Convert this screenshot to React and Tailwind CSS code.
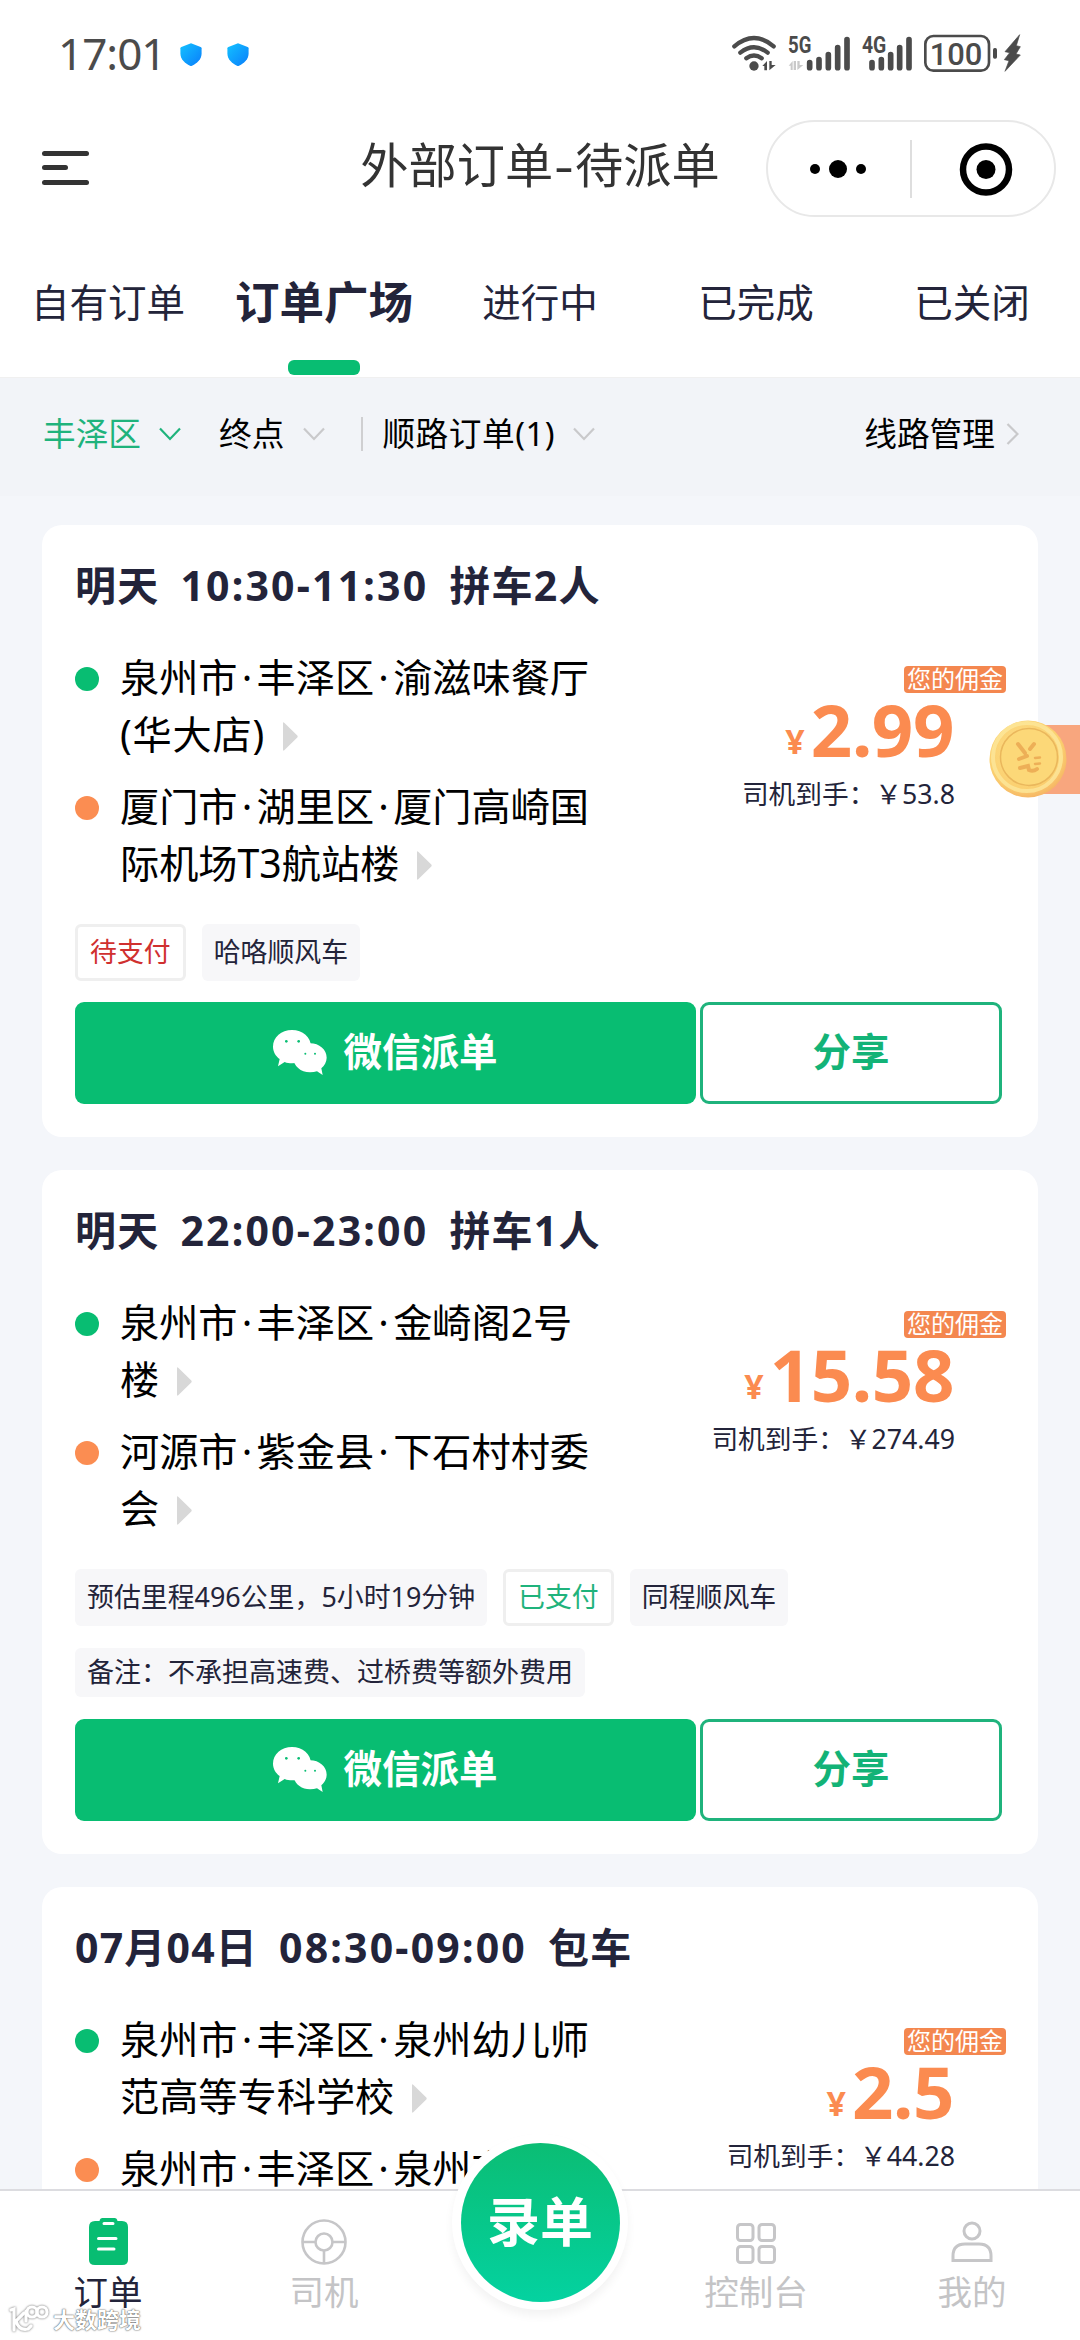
import { Fragment } from 'react'

const TABS = ['自有订单', '订单广场', '进行中', '已完成', '已关闭']

const ORDERS = [
  {
    id: 1,
    title: ['明天', '10:30-11:30', '拼车2人'],
    from: ['泉州市·丰泽区·渝滋味餐厅', '(华大店)'],
    to: ['厦门市·湖里区·厦门高崎国', '际机场T3航站楼'],
    price: '2.99',
    income: '53.8',
    tags: [
      { label: '待支付', type: 'unpaid' },
      { label: '哈咯顺风车', type: 'plain' },
    ],
  },
  {
    id: 2,
    title: ['明天', '22:00-23:00', '拼车1人'],
    from: ['泉州市·丰泽区·金崎阁2号', '楼'],
    to: ['河源市·紫金县·下石村村委', '会'],
    price: '15.58',
    income: '274.49',
    tags: [
      { label: '预估里程496公里，5小时19分钟', type: 'plain' },
      { label: '已支付', type: 'paid' },
      { label: '同程顺风车', type: 'plain' },
    ],
    remark: '备注：不承担高速费、过桥费等额外费用',
  },
  {
    id: 3,
    title: ['07月04日', '08:30-09:00', '包车'],
    from: ['泉州市·丰泽区·泉州幼儿师', '范高等专科学校'],
    to: ['泉州市·丰泽区·泉州市'],
    price: '2.5',
    income: '44.28',
    tags: [],
  },
]

const TAG_STYLES = {
  plain: 'bg-[#f7f7f9] text-[#23243a] px-[12px]',
  unpaid: 'border-[3px] border-[#efefef] text-[#d0302f] px-[12px]',
  paid: 'border-[3px] border-[#efefef] text-[#1fb37c] px-[12px]',
}

function Shield({ id }) {
  return (
    <svg className="w-[22px] h-[23px]" viewBox="0 0 22 23">
      <defs>
        <linearGradient id={id} x1="0" y1="0" x2="1" y2="1">
          <stop offset="0" stopColor="#13c2ff" />
          <stop offset="1" stopColor="#0a7dfb" />
        </linearGradient>
      </defs>
      <path d="M11 .3l9.6 3.6c.7.3 1 .7 1 1.4v5.2c0 5.600-4.400 9.800-9.600 12.200-.7.300-1.300.300-2 0C4.800 20.300.4 16.100.4 10.500V5.300c0-.7.300-1.100 1-1.400z" fill={`url(#${id})`} />
    </svg>
  )
}

function StatusIcons() {
  return (
    <svg className="w-[310px] h-[70px]" viewBox="0 0 930 210" fill="#4b4b4b">
      {/* wifi */}
      <g fill="none" stroke="#4b4b4b" strokeWidth="13" strokeLinecap="round">
        <path d="M28 79Q87 29 146 79" />
        <path d="M46 98Q87 66 128 98" />
        <path d="M64 115Q87 98 110 115" />
      </g>
      <circle cx="87" cy="138" r="14" />
      <path d="M112 138l14-15v28h-8v-13zM133 151v-28h7v12h12z" />
      {/* 5G */}
      <text x="189" y="100" fontSize="69" fontWeight="700" textLength="70" lengthAdjust="spacingAndGlyphs" className="font-['Roboto']">5G</text>
      <path d="M191 137l12-14v27h-6v-13zM206 123h7v27h-7zM217 123h7v12h11l-18 15z" fill="#c9c9c9" />
      <g stroke="#4b4b4b" strokeWidth="17" strokeLinecap="round">
        <path d="M254 128v15M282 119v24M310 104v39M338 83v60M366 59v84" />
        <path d="M441 128v15M469 119v24M497 104v39M524 83v60M552 59v84" />
      </g>
      {/* 4G */}
      <text x="411" y="100" fontSize="69" fontWeight="700" textLength="73" lengthAdjust="spacingAndGlyphs" className="font-['Roboto']">4G</text>
      {/* battery */}
      <rect x="601" y="48" width="191" height="104" rx="24" fill="none" stroke="#4b4b4b" strokeWidth="8" />
      <text x="614" y="134" fontSize="94" fontWeight="500" textLength="158" lengthAdjust="spacingAndGlyphs" className="font-['Roboto']">100</text>
      <rect x="804" y="84" width="12" height="32" rx="5" />
      <path d="M884 44l-44 51 14 3-16 21 14 3-12 32 46-49-13-3 13-22-12-3z" strokeLinejoin="round" stroke="#4b4b4b" strokeWidth="2" />
    </svg>
  )
}

function WechatIcon() {
  return (
    <svg className="w-[54px] h-[45px]" viewBox="0 0 162 135" fill="#fff">
      <path d="M57 0c32 0 57 22 57 50s-25 50-57 50c-8 0-15-1-22-4l-20 13 5-22C8 78 0 65 0 50 0 22 25 0 57 0z" />
      <path d="M111 40c28 0 50 19 50 43 0 13-7 24-16 32l4 20-17-11c-6 2-13 3-21 3-28 0-50-20-50-44s22-43 50-43z" />
      <g fill="#0abe74">
        <circle cx="40" cy="34" r="4" />
        <circle cx="77" cy="34" r="4" />
        <circle cx="97" cy="71" r="3" />
        <circle cx="126" cy="71" r="3" />
      </g>
    </svg>
  )
}

function Chevron({ color }) {
  return (
    <svg className="w-[22px] h-[14px]" viewBox="0 0 22 14" fill="none" stroke={color} strokeWidth="2.2">
      <path d="M1 1.500l10 10.500L21 1.500" />
    </svg>
  )
}

function Place({ lines, dot }) {
  return (
    <div className="flex">
      <span className={`w-6 h-6 rounded-full mt-[19px] mr-[21px] shrink-0 ${dot}`}></span>
      <div className="text-[39.200px] leading-[57px] text-black whitespace-nowrap">
        {lines.map((line, i) => (
          <div key={i} className={`flex items-center h-[57px] ${line.startsWith('(') ? 'tracking-[0.800px]' : ''}`}>
            {line.split('·').map((part, j) => (
              <Fragment key={j}>
                {j > 0 && <span className="w-[19px] text-center">·</span>}
                <span>{part}</span>
              </Fragment>
            ))}
            {i > 0 && (
              <svg className="w-[15px] h-[29px] ml-[18px] mt-[6px]" viewBox="0 0 15 29" fill="#d8d8d8">
                <path d="M0 1.500Q0-.5 1.500 1L14.300 13.500q.8 1 0 2L1.500 28Q0 29.500 0 27.500z" />
              </svg>
            )}
          </div>
        ))}
      </div>
    </div>
  )
}

function OrderCard({ order }) {
  return (
    <div className="bg-white rounded-[20px] px-[33px] pb-[33px]">
      <h2 className="flex gap-[21px] pt-[31px] text-[41px] leading-[58px] font-bold text-[#23243a] whitespace-nowrap">
        {order.title.map((part) => (
          <span key={part} className={part.includes(':') ? 'tracking-[2.200px]' : 'tracking-[1.200px]'}>{part}</span>
        ))}
      </h2>

      <div className="flex justify-between mt-[34px]">
        <div className="flex flex-col gap-[15px]">
          <Place lines={order.from} dot="bg-[#08bd72]" />
          <Place lines={order.to} dot="bg-[#fb8d52]" />
        </div>

        {/* Commission */}
        <div className="flex flex-col items-end pt-[18px]">
          <span className="-mr-[1px] h-[27px] w-[102px] rounded-[4px] bg-[#f4874f] text-white text-[24px] leading-[26px] text-center whitespace-nowrap">
            您的佣金
          </span>
          <div className="mr-[51px] -mt-[2px] h-[76px] flex items-baseline gap-[6px] font-bold text-[#fb8b50] leading-[76px]">
            <span className="text-[34px] relative -top-[3px]">¥</span>
            <span className="text-[72.500px] tracking-[-0.400px]">{order.price}</span>
          </div>
          <div className="mr-[50px] mt-[8px] text-[26.700px] leading-[38px] text-[#23243a] whitespace-nowrap">
            司机到手：￥{order.income}
          </div>
        </div>
      </div>

      <div className="flex gap-[16px] mt-[33px] text-[26.900px] leading-[38px] whitespace-nowrap">
        {order.tags.map((tag) => (
          <span key={tag.label} className={`h-[57px] flex items-center rounded-[6px] pb-px ${TAG_STYLES[tag.type]}`}>
            {tag.label}
          </span>
        ))}
      </div>
      {order.remark && (
        <div className="mt-[22px] mb-[22px] h-[49px] w-fit px-[12px] pb-px flex items-center bg-[#f7f7f9] rounded-[6px] text-[27px] text-[#23243a] whitespace-nowrap">
          {order.remark}
        </div>
      )}

      <div className={`flex gap-[4px] h-[102px] text-[38.500px] font-bold ${order.remark ? '' : 'mt-[21px]'}`}>
        <button className="w-[621px] rounded-[9px] bg-[#08bd72] text-white flex items-center justify-center gap-[16px] pb-[2px]">
          <WechatIcon />
          <span className="-mt-px">微信派单</span>
        </button>
        <button className="w-[302px] rounded-[9px] border-[3px] border-[#1fb37c] text-[#13b377] flex items-center justify-center pb-[3px]">
          分享
        </button>
      </div>
    </div>
  )
}

function NavItem({ icon, label, active }) {
  return (
    <div className={`w-[216px] flex flex-col items-center text-[34.500px] ${active ? 'text-[#23243a]' : 'text-[#c4c4c6]'}`}>
      <div className="h-[80px] pt-[27px]">{icon}</div>
      <span className="leading-[42px]">{label}</span>
    </div>
  )
}

export default function App() {
  return (
    <div className="w-[1080px] h-[2340px] overflow-hidden relative flex flex-col bg-[#f4f6fa] font-['Noto_Sans','Noto_Sans_CJK_SC',sans-serif]">
      {/* Status bar */}
      <div className="bg-white h-[110px] shrink-0 flex items-start pl-[58px] pr-[45px]">
        <span className="mt-[25px] w-[122px] text-[44px] leading-[56px] tracking-[-1px] text-[#4b4b4b]">
          17:01
        </span>
        <div className="mt-[43px] flex gap-[25px]">
          <Shield id="shield-a" />
          <Shield id="shield-b" />
        </div>
        <div className="ml-auto mt-[20px]">
          <StatusIcons />
        </div>
      </div>

      {/* Title bar */}
      <div className="bg-white h-[118px] shrink-0 flex items-center pl-[42px] pr-[24px]">
        <div className="flex flex-col gap-[9.500px] mb-[3px]">
          <span className="w-[47px] h-[5px] rounded-full bg-[#333]"></span>
          <span className="w-[26px] h-[5px] rounded-full bg-[#333]"></span>
          <span className="w-[47px] h-[5px] rounded-full bg-[#333]"></span>
        </div>
        <h1 className="w-[440px] ml-[231px] flex justify-center text-[48.200px] leading-[70px] mb-[10px] text-[#333] whitespace-nowrap">
          外部订单<span className="w-[22px] flex justify-center scale-x-125">-</span>待派单
        </h1>
        <div className="ml-auto -mt-px w-[290px] h-[97px] shrink-0 rounded-full border-2 border-[#e8e8e8] flex items-center justify-center">
          <svg className="w-[286px] h-[94px]" viewBox="0 0 286 94">
            <circle cx="47" cy="47" r="5" />
            <circle cx="70" cy="47" r="9" />
            <circle cx="93" cy="47" r="5" />
            <path d="M143 18v58" stroke="#dedede" strokeWidth="2" />
            <circle cx="218" cy="47.500" r="23" fill="none" stroke="#000" strokeWidth="6.500" />
            <circle cx="218" cy="47.500" r="9.500" />
          </svg>
        </div>
      </div>

      {/* Tabs */}
      <div className="bg-white h-[150px] shrink-0 flex border-b border-[#f0f0f0]">
        {TABS.map((tab, i) => (
          <div key={tab} className="w-[216px] flex flex-col items-center text-[#23243a]">
            <span className={`mt-[44px] h-[60px] leading-[60px] whitespace-nowrap ${i === 1 ? 'text-[44.500px] font-bold' : 'text-[38.500px]'}`}>
              {tab}
            </span>
            {i === 1 && <span className="mt-[28px] w-[72px] h-[15px] rounded-[6px] bg-[#08bd72]"></span>}
          </div>
        ))}
      </div>

      {/* Filters */}
      <div className="bg-[#f2f4f8] h-[118px] shrink-0 flex items-start pt-[31px] px-[43px] text-[32.700px] text-black whitespace-nowrap">
        <div className="flex items-center h-[50px] w-full">
          <span className="text-[#1fb37c]">丰泽区</span>
          <span className="ml-[18px]"><Chevron color="#1fb37c" /></span>
          <span className="ml-[38px]">终点</span>
          <span className="ml-[19px]"><Chevron color="#c9c9cb" /></span>
          <span className="ml-[36px] mr-[19px] w-[2px] h-[34px] bg-[#cfcfd1]"></span>
          <span className="tracking-[0.500px]">顺路订单(1)</span>
          <span className="ml-[18px]"><Chevron color="#c9c9cb" /></span>
          <span className="ml-auto">线路管理</span>
          <svg className="w-[13px] h-[22px] ml-[11px] mr-[18px]" viewBox="0 0 13 22" fill="none" stroke="#c9c9cb" strokeWidth="2.200">
            <path d="M1.500 1L11.500 11l-10 10" />
          </svg>
        </div>
      </div>

      {/* Order list */}
      <div className="flex-1 min-h-0 overflow-hidden px-[42px] pt-[29px] flex flex-col gap-[33px]">
        {ORDERS.map((order) => (
          <OrderCard key={order.id} order={order} />
        ))}
      </div>

      {/* Bottom nav */}
      <div className="relative h-[151px] shrink-0 bg-white border-t-2 border-[#dcdce0] flex">
        <NavItem
          active
          label="订单"
          icon={
            <svg className="w-[39px] h-[48px]" viewBox="0 0 39 48">
              <path d="M6 3h4.500Q11 0 13.500 0h12Q28 0 28.500 3H33q6 0 6 6v33q0 5-6 5H6q-6 0-6-5V9q0-6 6-6z" fill="#08bd72" />
              <path d="M15 5.500h9M9.500 20.500h17.500M9.500 31h15.500" stroke="#fff" strokeWidth="3" strokeLinecap="round" />
            </svg>
          }
        />
        <NavItem
          label="司机"
          icon={
            <svg className="w-[46px] h-[48px]" viewBox="0 0 46 48" fill="none" stroke="#c6c6c8" strokeWidth="2.600">
              <circle cx="23" cy="24" r="21.500" />
              <circle cx="23" cy="24" r="8.500" />
              <path d="M1.500 24h13M31.500 24h13M23 32.500v13" />
            </svg>
          }
        />
        <div className="w-[216px]"></div>
        <NavItem
          label="控制台"
          icon={
            <svg className="w-[40px] h-[48px]" viewBox="0 0 40 48" fill="none" stroke="#c6c6c8" strokeWidth="3">
              <rect x="1.500" y="6.500" width="15.500" height="16" rx="3" />
              <rect x="23" y="6.500" width="15.500" height="16" rx="3" />
              <rect x="1.500" y="28.500" width="15.500" height="16" rx="3" />
              <rect x="23" y="28.500" width="15.500" height="16" rx="3" />
            </svg>
          }
        />
        <NavItem
          label="我的"
          icon={
            <svg className="w-[42px] h-[48px]" viewBox="0 0 42 48" fill="none" stroke="#c6c6c8" strokeWidth="3">
              <circle cx="21" cy="13" r="8" />
              <path d="M2 42.500V38q0-12 12-12h14q12 0 12 12v4.500z" />
            </svg>
          }
        />

        {/* Create button */}
        <div className="absolute left-[452px] top-[-57px] w-[176px] h-[176px] rounded-full bg-white shadow-[0_6px_10px_rgba(0,0,0,0.05)] flex items-center justify-center">
          <div className="w-[159px] h-[159px] rounded-full bg-linear-to-b from-[#0bbd74] to-[#04d2a0] text-white text-[53px] font-bold flex items-center justify-center">
            录单
          </div>
        </div>

        {/* Watermark */}
        <div className="absolute left-[9px] top-[114px] flex items-center gap-[4px]">
          <svg className="w-[40px] h-[28px] drop-shadow-[0_0_1px_rgba(0,0,0,0.6)]" viewBox="0 0 40 28" fill="none" stroke="#fff" strokeWidth="3.200" strokeLinecap="round">
            <path d="M2 5l3-1v21M15 8l-8 8q3 10 12 8l3-3" />
            <circle cx="23" cy="7" r="5" />
            <circle cx="33" cy="7" r="5" />
            <path d="M17 6v10" />
          </svg>
          <span className="text-[22px] leading-[28px] font-bold text-white [text-shadow:0_0_2px_rgba(0,0,0,0.6),0_0_1px_rgba(0,0,0,0.6)]">大数跨境</span>
        </div>
      </div>

      {/* Reward coin */}
      <div className="absolute right-0 top-[718px] w-[91px] h-[82px] flex items-center">
        <div className="ml-auto w-[50px] h-[69px] bg-[#f8a67e]"></div>
        <svg className="absolute left-0 top-0 w-[80px] h-[82px]" viewBox="0 0 80 82">
          <defs>
            <radialGradient id="coin" cx=".45" cy=".4" r=".6">
              <stop offset="0" stopColor="#fde08a" />
              <stop offset=".8" stopColor="#fbd070" />
              <stop offset="1" stopColor="#f6b765" />
            </radialGradient>
          </defs>
          <circle cx="39" cy="41" r="38.500" fill="url(#coin)" />
          <circle cx="38" cy="39" r="34" fill="none" stroke="#fde79b" strokeWidth="4" opacity=".8" />
          <circle cx="40" cy="39" r="28.500" fill="#fcd878" stroke="#eab75c" strokeWidth="1.500" />
          <g fill="none" stroke="#e9a24c" strokeWidth="4" strokeLinecap="round" opacity=".75">
            <path d="M29 26l7 9M45 26l-4 5M30 41l8-3M31 50l8-2l1 4q4 2 8-1" />
            <path d="M46 40l5-.5M46 46l5-.5" strokeWidth="2.500" />
          </g>
        </svg>
      </div>
    </div>
  )
}
